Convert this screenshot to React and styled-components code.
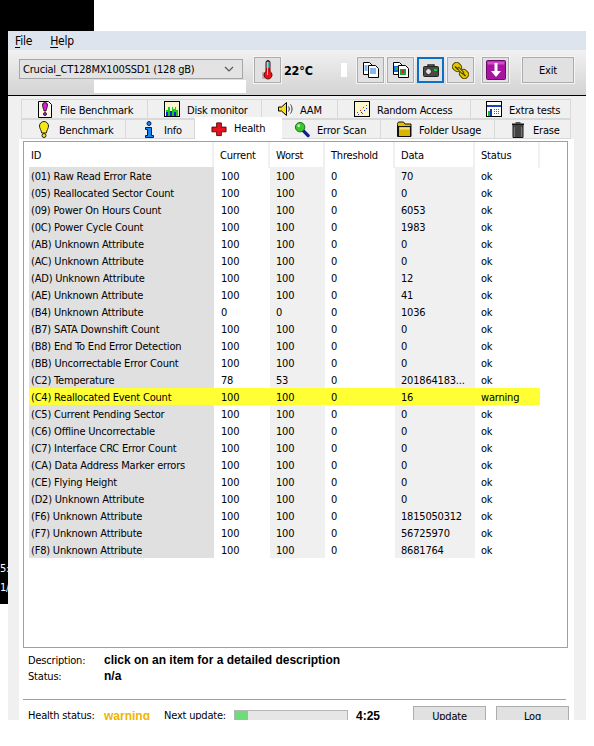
import React from "react";
import styled, { createGlobalStyle } from "styled-components";

const Global = createGlobalStyle`
  html, body { margin: 0; padding: 0; background: #fff; }
  body { font: 11px "DejaVu Sans Condensed", "DejaVu Sans", sans-serif; font-stretch: condensed; letter-spacing: -0.2px; color: #000; }
`;

const Page = styled.div`
  position: relative;
  width: 594px;
  height: 746px;
  overflow: hidden;
  background: #fff;
`;
const TopRow = styled.div`height: 31px;`;
const BlackCorner = styled.div`width: 94px; height: 31px; background: #000;`;
const Middle = styled.div`display: flex; align-items: flex-start;`;
const LeftStrip = styled.div`
  width: 8px;
  height: 573px;
  background: #000;
  color: #fff;
  overflow: hidden;
  white-space: nowrap;
  padding-top: 528px;
  box-sizing: border-box;
  line-height: 19px;
`;
const Window = styled.div`
  width: 578px;
  height: 689px;
  background: #f0f0f0;
  overflow: hidden;
`;
const MenuBar = styled.div`
  height: 19px;
  background: #dde4ed;
  display: flex;
  align-items: center;
  padding-left: 7px;
  gap: 18px;
  font-size: 12px;
  u { text-underline-offset: 2px; }
`;
const Toolbar = styled.div`
  border-bottom: 1px solid #000;
  background: linear-gradient(#f1f1f1, #d3d3d3);
  display: flex;
  align-items: flex-start;
  padding: 7px 0 0 11px;
  height: 38px;
`;
const Combo = styled.div`
  width: 224px;
  height: 20px;
  margin-top: 2px;
  box-sizing: border-box;
  border: 1px solid #a6a6a6;
  background: #e3e3e3;
  display: flex;
  align-items: center;
  justify-content: space-between;
  padding: 0 8px 0 3px;
  svg { display: block; }
`;
const ToolButton = styled.button`
  width: ${(p) => p.$w || 27}px;
  height: 26px;
  margin: 0 0 0 ${(p) => p.$ml ?? 3}px;
  padding: 0;
  box-sizing: border-box;
  background: #e1e1e1;
  border: ${(p) => (p.$focus ? "2px solid #0a70c8" : "1px solid #adadad")};
  outline: ${(p) => (p.$focus ? "0" : "1px solid #f4f4f4")};
  display: flex;
  align-items: center;
  justify-content: center;
  font: inherit;
  font-stretch: condensed;
  letter-spacing: inherit;
  color: #000;
`;
const Temp = styled.div`
  width: 70px;
  margin-left: 3px;
  height: 26px;
  line-height: 27px;
  font-size: 12.5px;
  font-weight: 700;
`;
const Mask = styled.div`
  position: absolute;
  left: ${(p) => p.$x}px;
  top: ${(p) => p.$y}px;
  width: ${(p) => p.$w}px;
  height: ${(p) => p.$h}px;
  background: #fff;
`;
const Tabs = styled.div`padding: 3px 0 0 13px;`;
const TabRow = styled.div`display: flex; height: 20px;`;
const Tab = styled.div`
  position: relative;
  width: ${(p) => p.$w}px;
  box-sizing: border-box;
  padding-left: ${(p) => p.$pad}px;
  display: flex;
  align-items: center;
  gap: 7px;
  background: ${(p) => (p.$active ? "#fff" : "#f0f0f0")};
  border: 1px solid #d9d9d9;
  border-left-width: ${(p) => (p.$first ? 1 : 0)}px;
  border-bottom-width: ${(p) => (p.$active ? 0 : 1)}px;
  ${(p) => p.$active && "margin-top: -2px; height: 22px; z-index: 1; border-color: #fff;"}
  white-space: nowrap;
`;
const TabLabel = styled.span`
  position: relative;
  top: ${(p) => (p.$active ? 0 : 1)}px;
`;
const TabIcon = styled.span`
  width: 16px;
  height: 18px;
  display: flex;
  align-items: center;
  justify-content: center;
  flex: none;
`;
const Panel = styled.div`
  width: 555px;
  height: 581px;
  margin-left: 11px;
  padding: 2px 0 0 4px;
  box-sizing: border-box;
  background: #fff;
`;
const List = styled.div`
  width: 545px;
  height: 507px;
  box-sizing: border-box;
  border: 1px solid #a0a0a0;
  padding-left: 5px;
`;
const columns = "185px 56px 55px 70px 80px 65px";
const HeadRow = styled.div`
  display: grid;
  grid-template-columns: ${columns};
  height: 25px;
`;
const HeadCell = styled.div`
  padding-left: ${(p) => (p.$first ? 2 : 6)}px;
  padding-top: 1px;
  line-height: 25px;
  border-right: 2px solid #f0f0f0;
`;
const Row = styled.div`
  display: grid;
  grid-template-columns: ${columns};
  height: 17px;
  line-height: 19px;
  white-space: nowrap;
`;
const Cell = styled.div`
  padding-left: ${(p) => p.$pad ?? 6}px;
  overflow: hidden;
  background: ${(p) => p.$bg || "transparent"};
`;
const DescBlock = styled.div`padding: 4px 0 0 5px; height: 43px; box-sizing: border-box;`;
const InfoRow = styled.div`display: flex; height: 16px; line-height: 17px;`;
const InfoLabel = styled.div`width: 76px;`;
const Strong = styled.div`
  font-family: "Liberation Sans", Arial, sans-serif;
  font-stretch: normal;
  letter-spacing: 0;
  font-size: 12px;
  font-weight: 700;
  line-height: 16px;
  color: ${(p) => p.$color || "#000"};
  ${(p) => p.$w && `width: ${p.$w}px;`}
  ${(p) => p.$ml && `margin-left: ${p.$ml}px;`}
`;
const Separator = styled.div`width: 543px; height: 1px; margin-top: 8px; background: #a0a0a0;`;
const StatusRow = styled.div`
  display: flex;
  align-items: flex-start;
  padding: 6px 0 0 5px;
  line-height: 20px;
  white-space: nowrap;
`;
const StatusValue = styled(Strong)`line-height: 20px;`;
const NextLabel = styled.div`width: 70px;`;
const Progress = styled.div`
  width: 114px;
  height: 16px;
  margin-top: 4px;
  box-sizing: border-box;
  border: 1px solid #b5b5b5;
  background: #e6e6e6;
`;
const ProgressFill = styled.div`height: 100%; background: #6fdc7a;`;
const ActionButton = styled.div`
  width: ${(p) => p.$w}px;
  height: 22px;
  margin-left: ${(p) => p.$ml}px;
  box-sizing: border-box;
  border: 1px solid #adadad;
  background: #e1e1e1;
  text-align: center;
`;

const Ico = ({ w = 16, h = 16, children }) => (
  <svg width={w} height={h} viewBox={`0 0 ${w} ${h}`} style={{ display: "block" }}>{children}</svg>
);

const Doc = ({ x = 0, y = 0, fill = "#fff", w = 9, h = 12 }) => (
  <path d={`M${x + .5} ${y + .5}h${w - 3}l3 3v${h - 3}h-${w}z`} fill={fill} stroke="#000" />
);

const icons = {
  fileBench: (
    <Ico h={17}>
      <path d="M1.5.5h10l3 3v13h-13z" fill="#fff8ea" stroke="#000" />
      <path d="M5.5 4a2.5 2.5 0 0 1 5 0c0 2-1.2 4-1.5 6h-2c-.3-2-1.5-4-1.5-6z" fill="#d81fd8" stroke="#000" strokeWidth=".8" />
      <circle cx="8" cy="13" r="1.5" fill="#d81fd8" stroke="#000" strokeWidth=".8" />
    </Ico>
  ),
  diskMon: (
    <Ico h={17}>
      <rect x=".5" y=".5" width="15" height="15" fill="#fbf6d0" stroke="#000" />
      <path d="M2 15V9h2v-3h2v4h2v-4h1v2h2v-2h1v3h2v6z" fill="#10d010" />
      <path d="M2 15v-4h2v4zM6 15v-5h2v5zM10 15v-4h2v4z" fill="#1020e0" />
    </Ico>
  ),
  aam: (
    <Ico>
      <path d="M1.5 6h3l5-4.5v13l-5-4.5h-3z" fill="#f8e020" stroke="#000" />
      <path d="M11.5 5.5c1 1.5 1 3.5 0 5M13.5 3.5c2 2.5 2 6.5 0 9" fill="none" stroke="#333" />
    </Ico>
  ),
  random: (
    <Ico>
      <rect x=".5" y=".5" width="15" height="15" fill="#fdf8cc" stroke="#000" />
      <g fill="#e02020"><rect x="3" y="11" width="1" height="1" /><rect x="6" y="9" width="1" height="1" /><rect x="9" y="6" width="1" height="1" /><rect x="12" y="4" width="1" height="1" /><rect x="8" y="12" width="1" height="1" /></g>
      <g fill="#2030d0"><rect x="4" y="13" width="1" height="1" /><rect x="7" y="11" width="1" height="1" /><rect x="10" y="9" width="1" height="1" /><rect x="12" y="7" width="1" height="1" /></g>
    </Ico>
  ),
  extra: (
    <Ico>
      <rect x=".5" y=".5" width="15" height="15" fill="#fff" stroke="#000" />
      <rect x="1" y="4" width="14" height="2" fill="#2040c0" />
      <rect x="2" y="10" width="2" height="5" fill="#10c010" />
      <rect x="4" y="8" width="2" height="7" fill="#1030d0" />
      <g fill="#d03030"><rect x="8" y="8" width="1" height="1" /><rect x="10" y="8" width="1" height="1" /><rect x="12" y="8" width="1" height="1" /><rect x="8" y="10" width="1" height="1" /><rect x="10" y="10" width="1" height="1" /><rect x="12" y="10" width="1" height="1" /><rect x="8" y="12" width="1" height="1" /><rect x="10" y="12" width="1" height="1" /><rect x="12" y="12" width="1" height="1" /></g>
    </Ico>
  ),
  bench: (
    <Ico w={12} h={17}>
      <path d="M1.5 5a4.5 4.5 0 0 1 9 0c0 2.500-1.800 4-2.200 7h-4.600C3.300 9 1.500 7.500 1.500 5z" fill="#f5e71a" stroke="#222" />
      <circle cx="6" cy="14.500" r="2" fill="#f5e71a" stroke="#222" />
    </Ico>
  ),
  info: (
    <Ico w={12} h={17}>
      <circle cx="6" cy="2.500" r="2" fill="#1284f0" stroke="#001a66" />
      <path d="M2.500 6.500h6v8h2v2h-8v-2h2v-6h-2z" fill="#1284f0" stroke="#001a66" />
    </Ico>
  ),
  health: (
    <Ico w={17} h={16}>
      <path d="M6 1.500h5v4.500h5v5h-5v4h-5v-4h-5v-5h5z" fill="#e8121c" stroke="#5a0608" />
    </Ico>
  ),
  scan: (
    <Ico w={17} h={17}>
      <path d="M10 10l5 5" stroke="#10208a" strokeWidth="3.500" strokeLinecap="round" />
      <circle cx="6.500" cy="6" r="5" fill="#3bc62e" stroke="#0f6d10" />
      <circle cx="5" cy="4.500" r="1.500" fill="#bff0b0" />
    </Ico>
  ),
  folder: (
    <Ico h={17}>
      <path d="M1.500 3.500v-1l1-1.500h5l1.500 2h6v12.500h-13.500z" fill="#e8c000" stroke="#111" />
      <rect x="2.500" y="5.500" width="12" height="10" fill="#dcb400" stroke="#111" />
      <rect x="3.500" y="6.500" width="10" height="2" fill="#f7e27a" />
    </Ico>
  ),
  erase: (
    <Ico h={17}>
      <path d="M2 3.500h12" stroke="#111" strokeWidth="2" />
      <path d="M5.500 1h5v2h-5z" fill="#555" />
      <path d="M3 5h10v11.500h-10z" fill="#777" stroke="#111" />
      <path d="M6 6v10M8 6v10M10 6v10" stroke="#111" />
    </Ico>
  ),
  thermo: (
    <Ico w={13} h={21}>
      <rect x="1" y="12" width="3" height="7" fill="#b8b8b8" />
      <path d="M5 2.500a2 2 0 0 1 4 0v9a4 4 0 1 1-4 0z" fill="#e8121c" stroke="#5a0608" />
      <path d="M5.500 2h3v6h-3z" fill="#38c0c8" />
      <rect x="6" y="2" width="1" height="13" fill="#f7b0b0" />
    </Ico>
  ),
  copyBlue: (
    <Ico w={17} h={16}>
      <Doc x={1} y={0} w={9} h={12} />
      <Doc x={6} y={3} w={10} h={12} />
      <path d="M2.500 4h3M2.500 6h3M2.500 8h3M8 7h6M8 9h6M8 11h6" stroke="#1070e0" />
    </Ico>
  ),
  copyGreen: (
    <Ico w={17} h={16}>
      <Doc x={1} y={0} w={9} h={12} />
      <Doc x={6} y={3} w={10} h={12} />
      <rect x="2" y="4" width="4" height="6" fill="#1070e0" />
      <rect x="3" y="5" width="3" height="3" fill="#20c020" />
      <rect x="8" y="7" width="6" height="6" fill="#20a040" />
      <rect x="10" y="8" width="2" height="3" fill="#e02020" />
    </Ico>
  ),
  camera: (
    <Ico w={16} h={13}>
      <path d="M5 2.500v-1.500h6v1.500" fill="none" stroke="#222" strokeWidth="1.400" />
      <rect x=".5" y="2.500" width="15" height="10" rx="1" fill="#4a4a4a" stroke="#222" />
      <circle cx="5.500" cy="7.500" r="3" fill="#e0e0e0" stroke="#222" />
      <rect x="11" y="5" width="3" height="2" fill="#20d020" />
    </Ico>
  ),
  chain: (
    <Ico w={17} h={17}>
      <g transform="rotate(-45 8.500 8.500)" fill="#e2c800" stroke="#5a4a00">
        <rect x="4.500" y="-1" width="8" height="9" rx="3.500" />
        <rect x="4.500" y="9" width="8" height="9" rx="3.500" />
        <rect x="7.500" y="5" width="2" height="7" fill="#f0dc30" />
      </g>
      <path d="M3 4.500l3 3M10.500 11l3 3" stroke="#4a3c00" strokeWidth="1.500" />
    </Ico>
  ),
  save: (
    <Ico w={20} h={20}>
      <rect x=".5" y=".5" width="19" height="19" rx="1" fill="#a814a0" stroke="#6a0868" />
      <rect x="1.500" y="1.500" width="17" height="3" fill="#d050c8" />
      <path d="M8.500 3h3v8h3.500l-5 6-5-6h3.500z" fill="#fff" />
    </Ico>
  ),
};

const row1 = [
  ["File Benchmark", 127, 15, "fileBench"],
  ["Disk monitor", 114, 16, "diskMon"],
  ["AAM", 76, 15, "aam"],
  ["Random Access", 133, 16, "random"],
  ["Extra tests", 100, 15, "extra"],
];
const row2 = [
  ["Benchmark", 105, 14, "bench"],
  ["Info", 69, 15, "info"],
  ["Health", 87, 16, "health", true],
  ["Error Scan", 99, 12, "scan"],
  ["Folder Usage", 114, 15, "folder"],
  ["Erase", 76, 15, "erase"],
];

const data = [
  ["(01) Raw Read Error Rate", "100", "100", "0", "70", "ok"],
  ["(05) Reallocated Sector Count", "100", "100", "0", "0", "ok"],
  ["(09) Power On Hours Count", "100", "100", "0", "6053", "ok"],
  ["(0C) Power Cycle Count", "100", "100", "0", "1983", "ok"],
  ["(AB) Unknown Attribute", "100", "100", "0", "0", "ok"],
  ["(AC) Unknown Attribute", "100", "100", "0", "0", "ok"],
  ["(AD) Unknown Attribute", "100", "100", "0", "12", "ok"],
  ["(AE) Unknown Attribute", "100", "100", "0", "41", "ok"],
  ["(B4) Unknown Attribute", "0", "0", "0", "1036", "ok"],
  ["(B7) SATA Downshift Count", "100", "100", "0", "0", "ok"],
  ["(B8) End To End Error Detection", "100", "100", "0", "0", "ok"],
  ["(BB) Uncorrectable Error Count", "100", "100", "0", "0", "ok"],
  ["(C2) Temperature", "78", "53", "0", "201864183...", "ok"],
  ["(C4) Reallocated Event Count", "100", "100", "0", "16", "warning"],
  ["(C5) Current Pending Sector", "100", "100", "0", "0", "ok"],
  ["(C6) Offline Uncorrectable", "100", "100", "0", "0", "ok"],
  ["(C7) Interface CRC Error Count", "100", "100", "0", "0", "ok"],
  ["(CA) Data Address Marker errors", "100", "100", "0", "0", "ok"],
  ["(CE) Flying Height", "100", "100", "0", "0", "ok"],
  ["(D2) Unknown Attribute", "100", "100", "0", "0", "ok"],
  ["(F6) Unknown Attribute", "100", "100", "0", "1815050312", "ok"],
  ["(F7) Unknown Attribute", "100", "100", "0", "56725970", "ok"],
  ["(F8) Unknown Attribute", "100", "100", "0", "8681764", "ok"],
];

const renderTab = ([label, w, pad, icon, active], i) => (
  <Tab key={label} $w={w} $pad={pad} $active={active} $first={i === 0}>
    <TabIcon>{icons[icon]}</TabIcon>
    <TabLabel $active={active}>{label}</TabLabel>
  </Tab>
);

const YELLOW = "#ffff33";

export default function App() {
  return (
    <Page>
      <Global />
      <TopRow><BlackCorner /></TopRow>
      <Middle>
        <LeftStrip>5:<br />1/</LeftStrip>
        <Window>
          <MenuBar>
            <span><u>F</u>ile</span>
            <span><u>H</u>elp</span>
          </MenuBar>
          <Toolbar>
            <Combo>
              <span>Crucial_CT128MX100SSD1 (128 gB)</span>
              <svg width="10" height="6" viewBox="0 0 10 6"><path d="M1 1l4 4 4-4" fill="none" stroke="#555" strokeWidth="1.200" /></svg>
            </Combo>
            <ToolButton $ml={11}>{icons.thermo}</ToolButton>
            <Temp>22°C</Temp>
            <ToolButton>{icons.copyBlue}</ToolButton>
            <ToolButton>{icons.copyGreen}</ToolButton>
            <ToolButton $focus>{icons.camera}</ToolButton>
            <ToolButton>{icons.chain}</ToolButton>
            <ToolButton $ml={8}>{icons.save}</ToolButton>
            <ToolButton $ml={13} $w={52}>Exit</ToolButton>
          </Toolbar>
          <Tabs>
            <TabRow>{row1.map(renderTab)}</TabRow>
            <TabRow>{row2.map(renderTab)}</TabRow>
          </Tabs>
          <Panel>
            <List>
              <HeadRow>
                <HeadCell $first>ID</HeadCell>
                <HeadCell>Current</HeadCell>
                <HeadCell>Worst</HeadCell>
                <HeadCell>Threshold</HeadCell>
                <HeadCell>Data</HeadCell>
                <HeadCell>Status</HeadCell>
              </HeadRow>
              {data.map((r) => {
                const hot = r[5] === "warning";
                const tint = (c) => (hot ? YELLOW : c);
                return (
                  <Row key={r[0]}>
                    <Cell $pad={2} $bg={tint("#e0e0e0")}>{r[0]}</Cell>
                    <Cell $pad={7} $bg={tint()}>{r[1]}</Cell>
                    <Cell $bg={tint("#f0f0f0")}>{r[2]}</Cell>
                    <Cell $bg={tint()}>{r[3]}</Cell>
                    <Cell $bg={tint("#f0f0f0")}>{r[4]}</Cell>
                    <Cell $bg={tint()}>{r[5]}</Cell>
                  </Row>
                );
              })}
            </List>
            <DescBlock>
              <InfoRow><InfoLabel>Description:</InfoLabel><Strong>click on an item for a detailed description</Strong></InfoRow>
              <InfoRow><InfoLabel>Status:</InfoLabel><Strong>n/a</Strong></InfoRow>
            </DescBlock>
            <Separator />
            <StatusRow>
              <InfoLabel>Health status:</InfoLabel>
              <StatusValue $color="#f0b400" $w={60}>warning</StatusValue>
              <NextLabel>Next update:</NextLabel>
              <Progress><ProgressFill style={{ width: `${(13 / 112) * 100}%` }} /></Progress>
              <StatusValue $w={57} $ml={8}>4:25</StatusValue>
              <ActionButton $w={73} $ml={0}>Update</ActionButton>
              <ActionButton $w={73} $ml={10}>Log</ActionButton>
            </StatusRow>
          </Panel>
        </Window>
      </Middle>
      <Mask $x={94} $y={80} $w={152} $h={13} />
      <Mask $x={341} $y={63} $w={6} $h={14} />
    </Page>
  );
}
